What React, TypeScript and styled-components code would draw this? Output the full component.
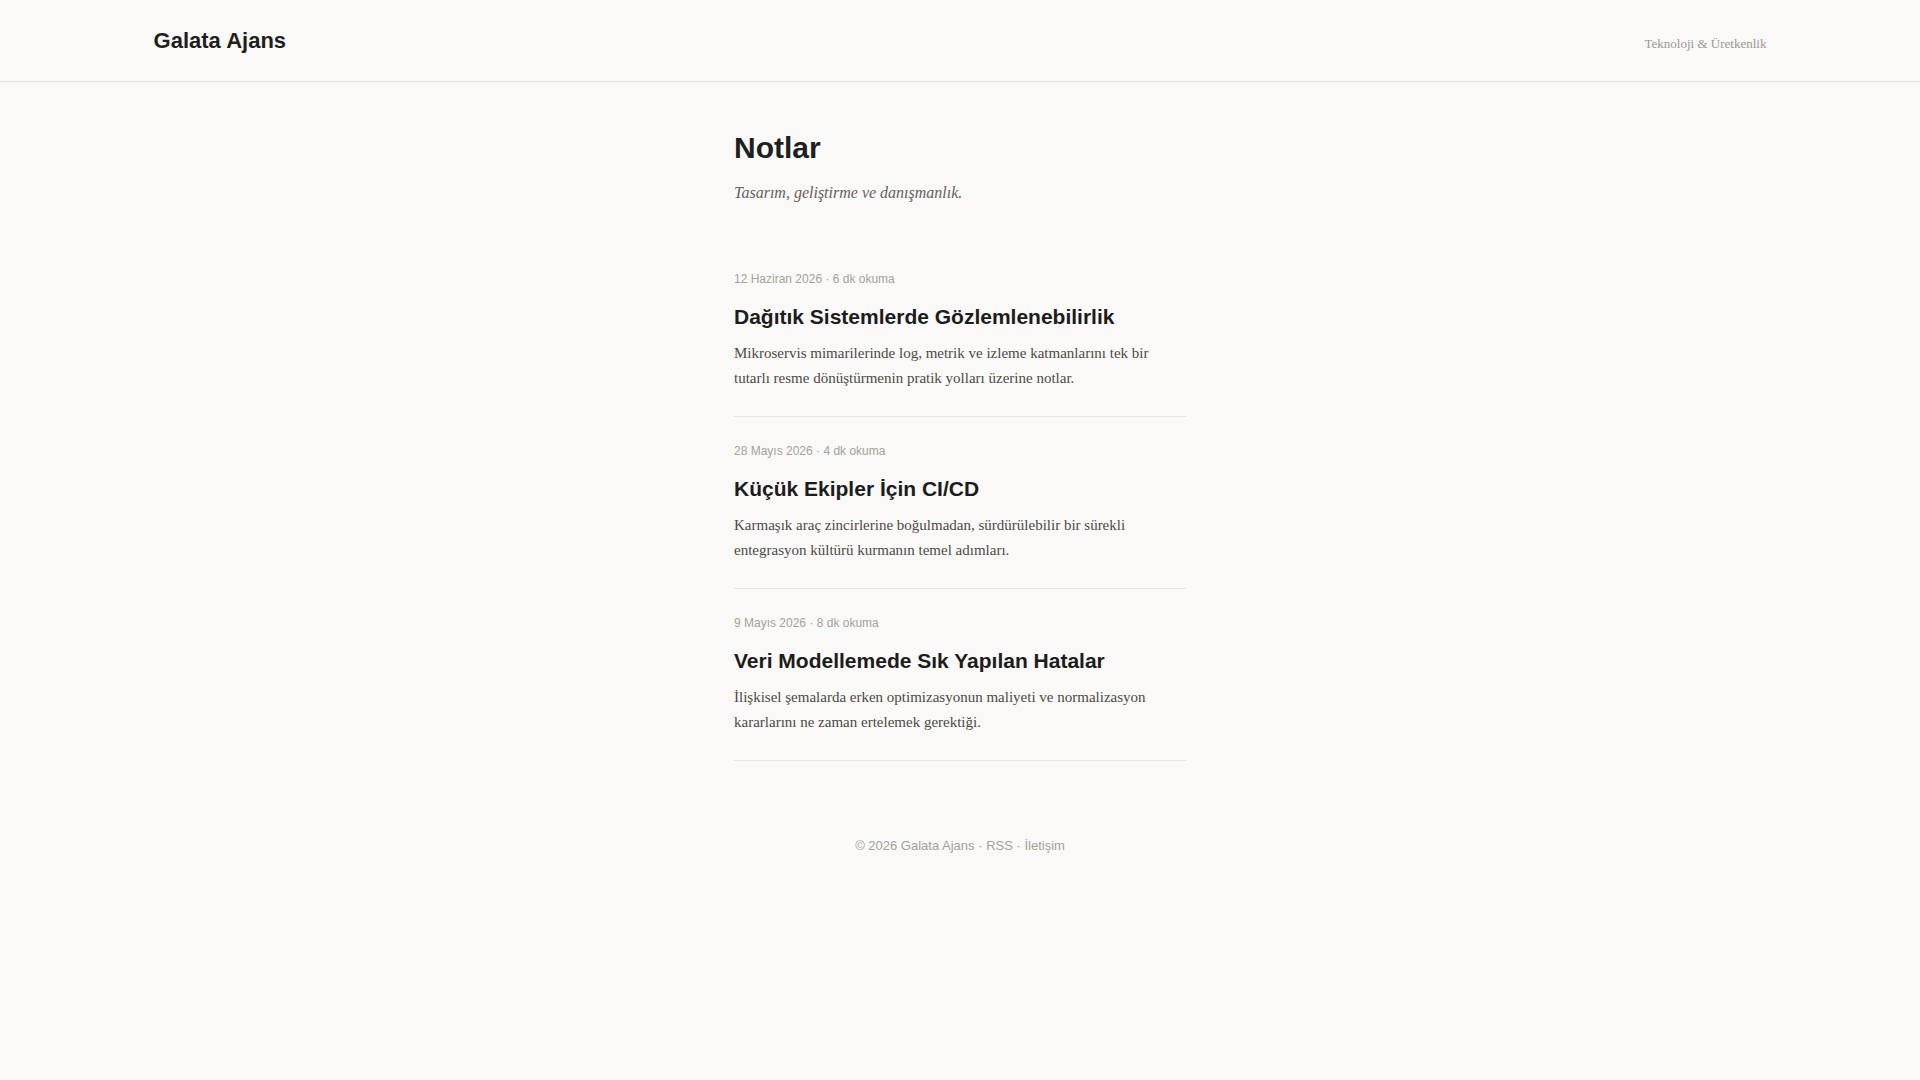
import * as React from 'react';
import styled, { createGlobalStyle } from 'styled-components';

const GlobalStyle = createGlobalStyle`
  html, body {
    margin: 0;
    padding: 0;
    background: #faf9f7;
  }
  body {
    font-family: "Liberation Sans", Arial, sans-serif;
    color: #1f1f1f;
  }
  * {
    box-sizing: border-box;
  }
`

const Header = styled.header`
  height: 82px;
  padding: 0 8%;
  display: flex;
  align-items: center;
  justify-content: space-between;
  border-bottom: 1px solid #e6e4e1;
`
const Logo = styled.a`
  font-size: 22px;
  font-weight: 700;
  color: #1f1f1f;
  text-decoration: none;
  margin-top: 1px;
`
const Tagline = styled.span`
  font-family: "Liberation Serif", "Times New Roman", serif;
  font-size: 13px;
  color: #9c9692;
  margin-top: 6px;
`

const Main = styled.main`
  width: 452px;
  margin: 0 auto;
  padding-top: 48px;
`
const Intro = styled.section`
  margin-bottom: 40px;
`
const PageTitle = styled.h1`
  margin: 0;
  font-size: 30px;
  line-height: 36px;
  font-weight: 700;
  color: #1f1f1f;
`
const Lead = styled.p`
  margin: 15px 0 0;
  font-family: "Liberation Serif", "Times New Roman", serif;
  font-style: italic;
  font-size: 16px;
  line-height: 24px;
  color: #65615d;
`

const PostList = styled.div`
  display: flex;
  flex-direction: column;
`
const Post = styled.article`
  padding: 26px 0 25px;
  border-bottom: 1px solid #e8e5e1;
`
const Meta = styled.div`
  font-size: 12px;
  line-height: 16px;
  color: #a6a09b;
`
const PostTitle = styled.h2`
  margin: 16px 0 0;
  font-size: 21px;
  line-height: 28px;
  font-weight: 700;
  color: #1c1c1c;
`
const Excerpt = styled.p`
  margin: 10px 0 0;
  font-family: "Liberation Serif", "Times New Roman", serif;
  font-size: 15px;
  line-height: 25px;
  color: #4d4945;
`

const Footer = styled.footer`
  padding: 75px 0 40px;
  text-align: center;
  font-size: 13px;
  line-height: 20px;
  color: #a6a09b;
`
const FooterLink = styled.a`
  color: inherit;
  text-decoration: none;
`

interface IPost {
  date: string,
  readTime: string,
  title: string,
  excerpt: string,
}

const posts: IPost[] = [
  {
    date: '12 Haziran 2026',
    readTime: '6 dk okuma',
    title: 'Dağıtık Sistemlerde Gözlemlenebilirlik',
    excerpt: 'Mikroservis mimarilerinde log, metrik ve izleme katmanlarını tek bir tutarlı resme dönüştürmenin pratik yolları üzerine notlar.',
  },
  {
    date: '28 Mayıs 2026',
    readTime: '4 dk okuma',
    title: 'Küçük Ekipler İçin CI/CD',
    excerpt: 'Karmaşık araç zincirlerine boğulmadan, sürdürülebilir bir sürekli entegrasyon kültürü kurmanın temel adımları.',
  },
  {
    date: '9 Mayıs 2026',
    readTime: '8 dk okuma',
    title: 'Veri Modellemede Sık Yapılan Hatalar',
    excerpt: 'İlişkisel şemalarda erken optimizasyonun maliyeti ve normalizasyon kararlarını ne zaman ertelemek gerektiği.',
  },
]

export default class App extends React.Component {
  public render() {
    return (
      <>
        <GlobalStyle />
        <Header>
          <Logo href="#">Galata Ajans</Logo>
          <Tagline>Teknoloji &amp; Üretkenlik</Tagline>
        </Header>
        <Main>
          <Intro>
            <PageTitle>Notlar</PageTitle>
            <Lead>Tasarım, geliştirme ve danışmanlık.</Lead>
          </Intro>
          <PostList>
            {posts.map(post => (
              <Post key={post.title}>
                <Meta>{post.date} · {post.readTime}</Meta>
                <PostTitle>{post.title}</PostTitle>
                <Excerpt>{post.excerpt}</Excerpt>
              </Post>
            ))}
          </PostList>
        </Main>
        <Footer>
          © 2026 Galata Ajans · <FooterLink href="#">RSS</FooterLink> · <FooterLink href="#">İletişim</FooterLink>
        </Footer>
      </>
    )
  }
}
